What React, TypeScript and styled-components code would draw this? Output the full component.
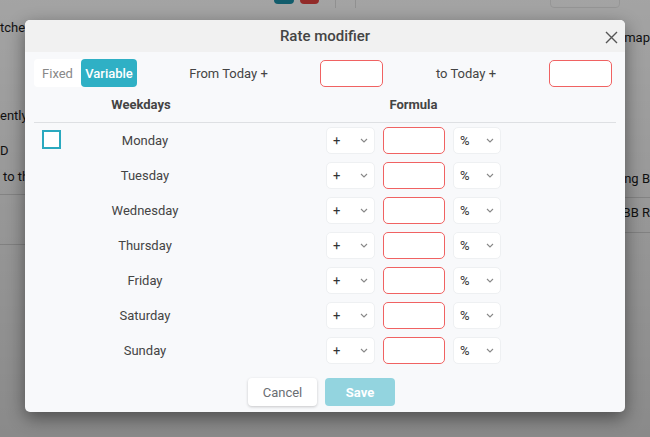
import * as React from 'react';
import styled, { createGlobalStyle } from 'styled-components';

const GlobalStyle = createGlobalStyle`
    html, body {
        margin: 0;
        padding: 0;
        width: 650px;
        height: 437px;
        overflow: hidden;
        font-family: Roboto, "Liberation Sans", sans-serif;
    }
`;

const Page = styled.div`
    position: relative;
    width: 650px;
    height: 437px;
    overflow: hidden;
`;

// the page behind the dialog, mostly hidden
const Backdrop = styled.div`
    display: grid;
    grid-template-columns: 30px 590px 30px;
    height: 437px;
    background: #fbfbfb;
    font-size: 13px;
    color: #1a1a1a;
`;

const SideColumn = styled.div<{ $align: 'start' | 'end' }>`
    display: flex;
    flex-direction: column;
    align-items: ${(p) => (p.$align === 'end' ? 'flex-end' : 'flex-start')};
    overflow: hidden;
    white-space: nowrap;
`;

const SideText = styled.div<{ $mt: number; $ml?: number }>`
    margin-top: ${(p) => p.$mt}px;
    margin-left: ${(p) => p.$ml ?? 0}px;
    line-height: 15px;
`;

const SideRule = styled.div<{ $mt: number }>`
    margin-top: ${(p) => p.$mt}px;
    align-self: stretch;
    height: 1px;
    background: #d8d8d8;
`;

const TopStrip = styled.div`
    display: flex;
    align-items: flex-start;
    height: 8px;
    padding-left: 244px;
    overflow: hidden;
    white-space: nowrap;
`;

const Swatch = styled.div<{ $color: string }>`
    width: 24px;
    height: 4px;
    margin-right: 6px;
    border-radius: 0 0 4px 4px;
    background: ${(p) => p.$color};
`;

const VRule = styled.div`
    width: 1px;
    height: 8px;
    margin: 0 9px 0 10px;
    background: #dedede;
`;

const TopText = styled.div`
    margin: -12px 0 0 6px;
    width: 220px;
    line-height: 15px;
`;

const TopBox = styled.div`
    margin-top: -14px;
    height: 20px;
    padding: 0 8px;
    line-height: 15px;
    border: 1px solid #e6e6e6;
    border-radius: 4px;
`;

const Overlay = styled.div`
    position: absolute;
    inset: 0;
    background: linear-gradient(rgba(0, 0, 0, 0.35), rgba(0, 0, 0, 0.45));
`;

const Dialog = styled.div`
    position: absolute;
    left: 25px;
    top: 20px;
    width: 600px;
    border-radius: 5px;
    overflow: hidden;
    background: #f8f9fb;
    box-shadow: 0 6px 18px rgba(0, 0, 0, 0.45);
`;

const Header = styled.div`
    position: relative;
    height: 32px;
    display: flex;
    align-items: center;
    justify-content: center;
    background: #f1f1f1;
    color: #444;
    font-size: 15px;
    font-weight: 500;
`;

const CloseButton = styled.button`
    position: absolute;
    right: 6px;
    top: 9px;
    width: 16px;
    height: 16px;
    padding: 0;
    border: none;
    background: none;
    display: flex;
    align-items: center;
    justify-content: center;
`;

const Body = styled.div`
    padding: 7px 9px 6px 9px;
`;

const TopRow = styled.div`
    display: grid;
    grid-template-columns: 103px 183px 63px 166px 63px;
    align-items: center;
    height: 28px;
`;

const Toggle = styled.div`
    display: flex;
    height: 28px;
    border-radius: 4px;
    background: #fff;
`;

const ToggleOption = styled.div<{ $active?: boolean; $w: number }>`
    width: ${(p) => p.$w}px;
    display: flex;
    align-items: center;
    justify-content: center;
    border-radius: 4px;
    font-size: 13px;
    font-weight: ${(p) => (p.$active ? 500 : 400)};
    color: ${(p) => (p.$active ? '#fff' : '#888')};
    background: ${(p) => (p.$active ? '#2fb0c5' : 'transparent')};
`;

const Label = styled.div`
    text-align: center;
    font-size: 13px;
    color: #444;
`;

const TextInput = styled.div<{ $w: number }>`
    width: ${(p) => p.$w}px;
    height: 27px;
    box-sizing: border-box;
    border: 1px solid #f06262;
    border-radius: 5px;
    background: #fff;
`;

const Grid = styled.div`
    display: grid;
    grid-template-columns: 40px 142px 110px 175px;
    align-items: center;
`;

const HeadRow = styled(Grid)`
    height: 35px;
    border-bottom: 1px solid #dee0e3;
    font-size: 13px;
    font-weight: 700;
    color: #444;
`;

const HeadCell = styled.div<{ $col: number; $shift: number }>`
    grid-column: ${(p) => p.$col};
    text-align: center;
    padding-right: ${(p) => p.$shift}px;
`;

const Row = styled(Grid)`
    height: 35px;
`;

const Check = styled.div`
    width: 19px;
    height: 19px;
    box-sizing: border-box;
    margin-left: 8px;
    margin-top: -2px;
    border: 2px solid #2aa9bf;
    background: #fff;
`;

const Day = styled.div`
    grid-column: 2;
    text-align: center;
    font-size: 13px;
    color: #444;
`;

const Formula = styled.div`
    grid-column: 4;
    display: flex;
    gap: 8px;
    align-items: center;
`;

const Select = styled.div<{ $w: number }>`
    width: ${(p) => p.$w}px;
    height: 27px;
    box-sizing: border-box;
    border: 1px solid #eef0f2;
    border-radius: 5px;
    background: #fff;
    display: flex;
    align-items: center;
    justify-content: space-between;
    padding: 0 6px 0 6px;
    font-size: 13px;
    color: #333;
`;

const Footer = styled.div`
    display: flex;
    justify-content: center;
    gap: 8px;
    padding-top: 10px;
    padding-right: 7px;
`;

const Button = styled.button<{ $primary?: boolean }>`
    width: ${(p) => (p.$primary ? 70 : 69)}px;
    height: 28px;
    border: none;
    border-radius: 4px;
    font-family: inherit;
    font-size: 13px;
    font-weight: ${(p) => (p.$primary ? 700 : 400)};
    color: ${(p) => (p.$primary ? '#fff' : '#6a6e73')};
    background: ${(p) => (p.$primary ? '#93d4df' : '#fff')};
    box-shadow: ${(p) => (p.$primary ? 'none' : '0 1px 3px rgba(0, 0, 0, 0.2)')};
`;

const Chevron = () => (
    <svg width="8" height="5" viewBox="0 0 8 5">
        <path d="M1 1l3 3 3-3" fill="none" stroke="#888" strokeWidth="1.1" />
    </svg>
);

const days = ['Monday', 'Tuesday', 'Wednesday', 'Thursday', 'Friday', 'Saturday', 'Sunday'];

export default function App(): React.ReactElement {
    return (
        <Page>
            <GlobalStyle />
            <Backdrop>
                <SideColumn $align="start">
                    <SideText $mt={20}>tches</SideText>
                    <SideText $mt={73}>ently</SideText>
                    <SideText $mt={20}>D</SideText>
                    <SideText $mt={11} $ml={3}>to th</SideText>
                    <SideRule $mt={10} />
                    <SideRule $mt={49} />
                </SideColumn>
                <TopStrip>
                    <Swatch $color="#1b8ea6" />
                    <Swatch $color="#e0413f" />
                    <VRule />
                    <VRule />
                    <TopText>Standard Double Room</TopText>
                    <TopBox>Standard</TopBox>
                </TopStrip>
                <SideColumn $align="end">
                    <SideText $mt={30}>map</SideText>
                    <SideText $mt={126}>ing B</SideText>
                    <SideRule $mt={11} />
                    <SideText $mt={7}>BB R</SideText>
                    <SideRule $mt={12} />
                </SideColumn>
            </Backdrop>
            <Overlay />
            <Dialog>
                <Header>
                    Rate modifier
                    <CloseButton>
                        <svg width="13" height="13" viewBox="0 0 13 13">
                            <path d="M1 1l11 11M12 1L1 12" stroke="#555" strokeWidth="1.4" />
                        </svg>
                    </CloseButton>
                </Header>
                <Body>
                    <TopRow>
                        <Toggle>
                            <ToggleOption $w={47}>Fixed</ToggleOption>
                            <ToggleOption $w={56} $active>
                                Variable
                            </ToggleOption>
                        </Toggle>
                        <Label>From Today +</Label>
                        <TextInput $w={63} />
                        <Label>to Today +</Label>
                        <TextInput $w={63} />
                    </TopRow>
                    <HeadRow>
                        <HeadCell $col={2} $shift={8}>Weekdays</HeadCell>
                        <HeadCell $col={4} $shift={0}>Formula</HeadCell>
                    </HeadRow>
                    {days.map((day, i) => (
                        <Row key={day}>
                            <div>{i === 0 && <Check />}</div>
                            <Day>{day}</Day>
                            <Formula>
                                <Select $w={49}>
                                    +
                                    <Chevron />
                                </Select>
                                <TextInput $w={62} />
                                <Select $w={48}>
                                    %
                                    <Chevron />
                                </Select>
                            </Formula>
                        </Row>
                    ))}
                    <Footer>
                        <Button>Cancel</Button>
                        <Button $primary>Save</Button>
                    </Footer>
                </Body>
            </Dialog>
        </Page>
    );
}
